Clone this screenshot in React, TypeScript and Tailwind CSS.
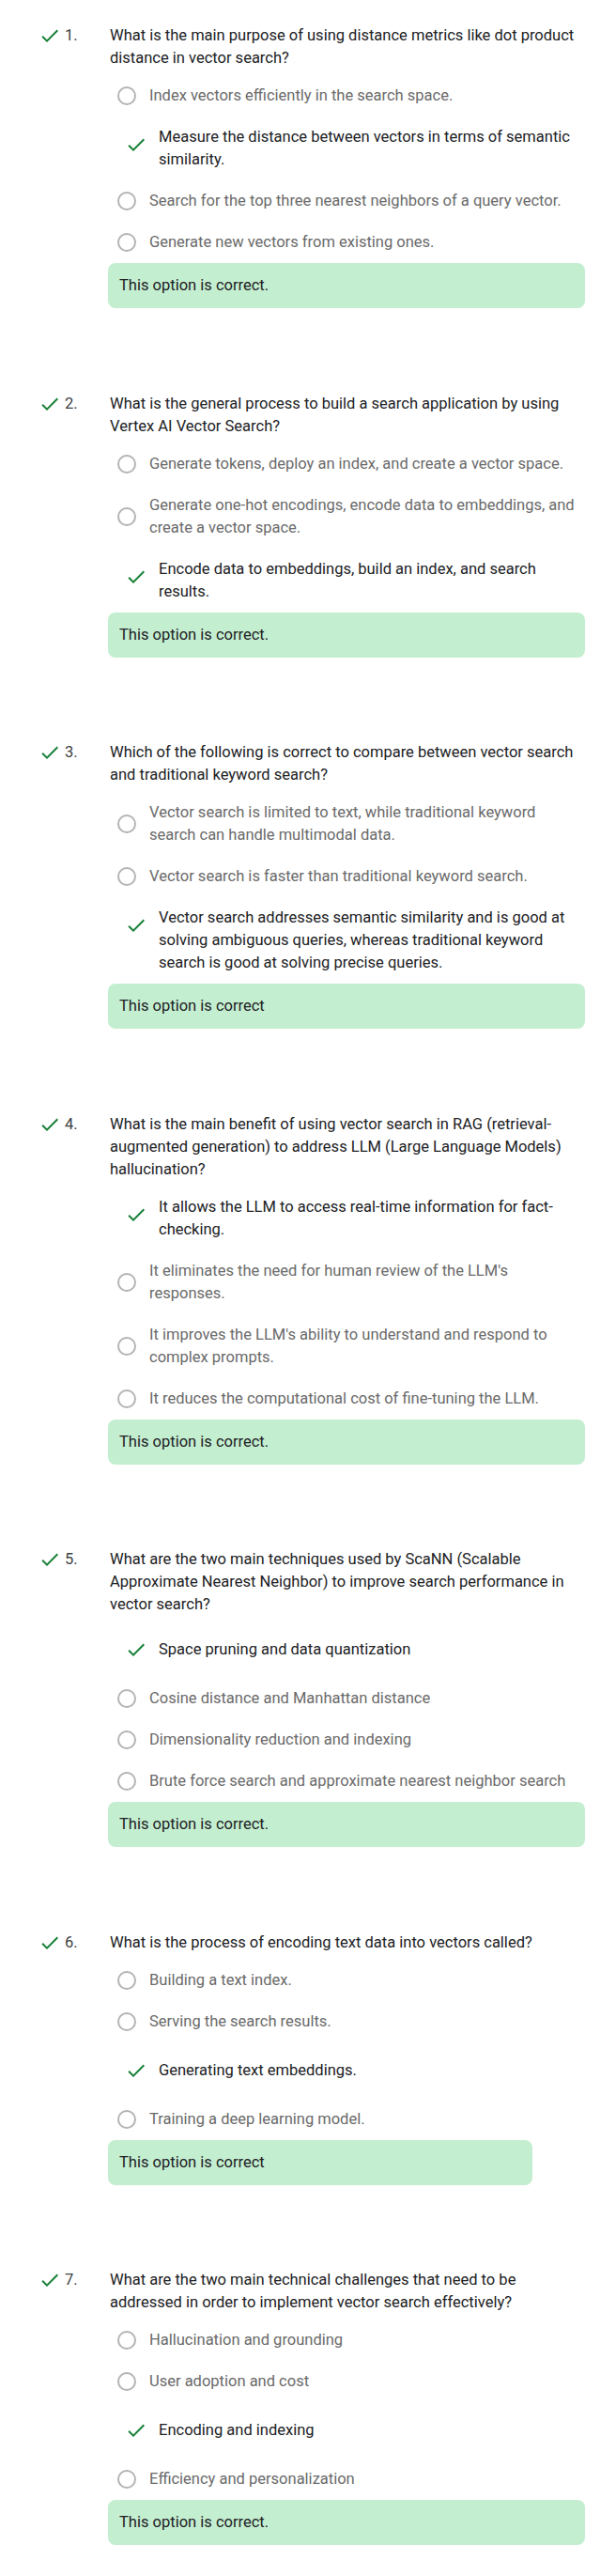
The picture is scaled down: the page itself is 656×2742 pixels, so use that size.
import React from "react";

type Option = { text: string; selected?: boolean };
type Question = {
  n: number;
  q: string;
  options: Option[];
  feedback: string;
  narrow?: boolean;
};

const questions: Question[] = [
  {
    n: 1,
    q: "What is the main purpose of using distance metrics like dot product distance in vector search?",
    options: [
      { text: "Index vectors efficiently in the search space." },
      { text: "Measure the distance between vectors in terms of semantic similarity.", selected: true },
      { text: "Search for the top three nearest neighbors of a query vector." },
      { text: "Generate new vectors from existing ones." },
    ],
    feedback: "This option is correct.",
  },
  {
    n: 2,
    q: "What is the general process to build a search application by using Vertex AI Vector Search?",
    options: [
      { text: "Generate tokens, deploy an index, and create a vector space." },
      { text: "Generate one-hot encodings, encode data to embeddings, and create a vector space." },
      { text: "Encode data to embeddings, build an index, and search results.", selected: true },
    ],
    feedback: "This option is correct.",
  },
  {
    n: 3,
    q: "Which of the following is correct to compare between vector search and traditional keyword search?",
    options: [
      { text: "Vector search is limited to text, while traditional keyword search can handle multimodal data." },
      { text: "Vector search is faster than traditional keyword search." },
      {
        text: "Vector search addresses semantic similarity and is good at solving ambiguous queries, whereas traditional keyword search is good at solving precise queries.",
        selected: true,
      },
    ],
    feedback: "This option is correct",
  },
  {
    n: 4,
    q: "What is the main benefit of using vector search in RAG (retrieval-augmented generation) to address LLM (Large Language Models) hallucination?",
    options: [
      { text: "It allows the LLM to access real-time information for fact-checking.", selected: true },
      { text: "It eliminates the need for human review of the LLM's responses." },
      { text: "It improves the LLM's ability to understand and respond to complex prompts." },
      { text: "It reduces the computational cost of fine-tuning the LLM." },
    ],
    feedback: "This option is correct.",
  },
  {
    n: 5,
    q: "What are the two main techniques used by ScaNN (Scalable Approximate Nearest Neighbor) to improve search performance in vector search?",
    options: [
      { text: "Space pruning and data quantization", selected: true },
      { text: "Cosine distance and Manhattan distance" },
      { text: "Dimensionality reduction and indexing" },
      { text: "Brute force search and approximate nearest neighbor search" },
    ],
    feedback: "This option is correct.",
  },
  {
    n: 6,
    q: "What is the process of encoding text data into vectors called?",
    options: [
      { text: "Building a text index." },
      { text: "Serving the search results." },
      { text: "Generating text embeddings.", selected: true },
      { text: "Training a deep learning model." },
    ],
    feedback: "This option is correct",
    narrow: true,
  },
  {
    n: 7,
    q: "What are the two main technical challenges that need to be addressed in order to implement vector search effectively?",
    options: [
      { text: "Hallucination and grounding" },
      { text: "User adoption and cost" },
      { text: "Encoding and indexing", selected: true },
      { text: "Efficiency and personalization" },
    ],
    feedback: "This option is correct.",
  },
];

// material "check" glyph
const Check = () => (
  <svg width="24" height="24" viewBox="0 0 24 24" className="shrink-0">
    <path
      d="M9 16.17L4.83 12l-1.42 1.41L9 19 21 7l-1.41-1.41z"
      fill="#188038"
    />
  </svg>
);

const OptionRow = ({ opt }: { opt: Option }) => {
  if (opt.selected)
    return (
      <div className="flex items-center py-2.5 pl-[18px] pr-[9px]">
        <div className="flex h-10 w-6 shrink-0 items-center self-start">
          <Check />
        </div>
        <span className="ml-3 text-[16.5px] leading-6 text-[#202124]">
          {opt.text}
        </span>
      </div>
    );
  return (
    <div className="flex items-center py-2.5 pl-[10px] pr-[9px]">
      <span className="h-5 w-5 shrink-0 rounded-full border-2 border-[#b4b4b4]" />
      <span className="ml-[14px] text-[16.5px] leading-6 text-[#6a6a6a]">
        {opt.text}
      </span>
    </div>
  );
};

const QuestionBlock = ({ item }: { item: Question }) => {
  return (
    <div className="flex">
      <div className="flex h-6 w-[115px] shrink-0 items-center pl-[41px]">
        <Check />
        <span className="ml-[4px] text-[16.5px] leading-6 text-[#3c4043]">
          {item.n}.
        </span>
      </div>
      <div className={item.narrow ? "w-fit max-w-[508px]" : "w-[508px]"}>
        <div className="max-w-[497px] pl-[2px] text-[16.5px] leading-6 text-[#202124]">
          {item.q}
        </div>
        <div className="mt-1.5 flex flex-col">
          {item.options.map((o, i) => (
            <OptionRow key={i} opt={o} />
          ))}
        </div>
        <div className="rounded-lg bg-[#c4eed0] px-3 py-3 text-[16.5px] leading-6 text-[#202124]">
          {item.feedback}
        </div>
      </div>
    </div>
  );
};

export default function App() {
  return (
    <div className="min-h-screen bg-white font-['Roboto',sans-serif]">
      <div className="flex flex-col gap-[89.5px] pt-[26px] pb-[34px]">
        {questions.map((q) => (
          <QuestionBlock key={q.n} item={q} />
        ))}
      </div>
    </div>
  );
}
